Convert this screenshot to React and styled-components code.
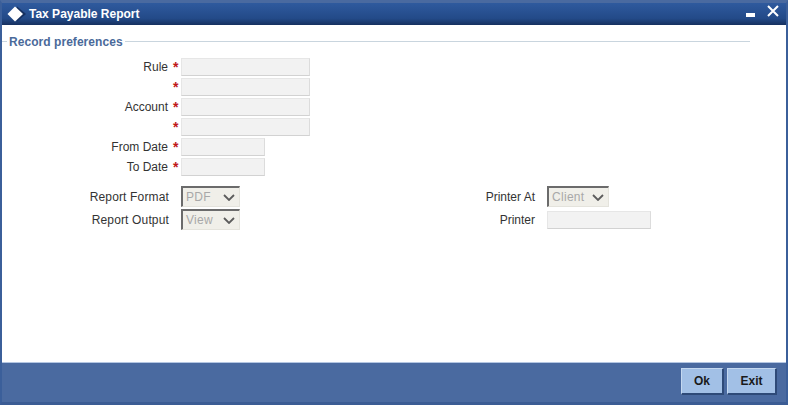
import React from "react";
import styled, { createGlobalStyle } from "styled-components";

const GlobalStyle = createGlobalStyle`
  html, body {
    margin: 0;
    padding: 0;
    background: #fff;
  }
  * {
    box-sizing: border-box;
  }
`;

function Chevron() {
  return (
    <svg width="12" height="7" viewBox="0 0 12 7">
      <path d="M1 1 L6 6 L11 1" fill="none" stroke="#5c5c5c" strokeWidth="1.8" />
    </svg>
  );
}

function Diamond() {
  return (
    <svg width="20" height="16" viewBox="0 0 20 16">
      <path d="M10 0.5 L19 8 L10 15.5 Z" fill="#16305f" />
      <path d="M8 0.5 L16 8 L8 15.5 L0.5 8 Z" fill="#fff" />
    </svg>
  );
}

function Field({ label, width }) {
  return (
    <Row>
      <Label>{label}</Label>
      <Star>*</Star>
      <TextBox $width={width} />
    </Row>
  );
}

function Dropdown({ value, width }) {
  return (
    <SelectBox $width={width}>
      <SelectText>{value}</SelectText>
      <Chevron />
    </SelectBox>
  );
}

export default function App() {
  return (
    <Window>
      <GlobalStyle />
      <TitleBar>
        <TitleLeft>
          <Diamond />
          <Title>Tax Payable Report</Title>
        </TitleLeft>
        <WinButtons>
          <svg width="9" height="4" viewBox="0 0 9 4">
            <rect width="9" height="4" fill="#fff" />
          </svg>
          <svg width="12" height="12" viewBox="0 0 12 12">
            <path d="M1 1 L11 11 M11 1 L1 11" stroke="#fff" strokeWidth="2" />
          </svg>
        </WinButtons>
      </TitleBar>

      <Body>
        <Legend>
          <LegendTick />
          <LegendText>Record preferences</LegendText>
          <LegendLine />
        </Legend>

        <Fields>
          <Field label="Rule" width={129} />
          <Field label="" width={129} />
          <Field label="Account" width={129} />
          <Field label="" width={129} />
          <Field label="From Date" width={84} />
          <Field label="To Date" width={84} />
        </Fields>

        <Selects>
          <SelectColumn>
            <SelectRow>
              <SelectLabel>Report Format</SelectLabel>
              <Dropdown value="PDF" width={59} />
            </SelectRow>
            <SelectRow>
              <SelectLabel>Report Output</SelectLabel>
              <Dropdown value="View" width={59} />
            </SelectRow>
          </SelectColumn>
          <PrinterColumn>
            <SelectRow>
              <PrinterLabel>Printer At</PrinterLabel>
              <Dropdown value="Client" width={62} />
            </SelectRow>
            <SelectRow>
              <PrinterLabel>Printer</PrinterLabel>
              <TextBox $width={104} />
            </SelectRow>
          </PrinterColumn>
        </Selects>
      </Body>

      <Footer>
        <FootButton $width={43}>Ok</FootButton>
        <FootButton $width={50}>Exit</FootButton>
      </Footer>
    </Window>
  );
}

const Window = styled.div`
  width: 788px;
  height: 405px;
  display: flex;
  flex-direction: column;
  background: #4a6aa0;
  border: 2px solid #3b5f9a;
  border-top: 3px solid #4a6aa0;
  border-bottom: 3px solid #3b5c94;
  font-family: "Liberation Sans", Arial, sans-serif;
  overflow: hidden;
`;

const TitleBar = styled.div`
  height: 22px;
  flex: none;
  display: flex;
  align-items: center;
  justify-content: space-between;
  padding: 0 7px 0 5px;
  background: linear-gradient(#2f5a9e, #234a88 70%, #16305f);
`;

const TitleLeft = styled.div`
  display: flex;
  align-items: center;
  gap: 2px;
`;

const Title = styled.span`
  color: #fff;
  font-size: 12px;
  font-weight: bold;
`;

const WinButtons = styled.div`
  display: flex;
  align-items: flex-start;
  gap: 12px;
  height: 100%;
  padding-top: 2px;

  svg:first-child {
    margin-top: 8px;
  }
`;

const Body = styled.div`
  flex: 1;
  background: #fff;
  border-bottom: 1px solid #b4c6e2;
  padding-top: 9px;
`;

const Legend = styled.div`
  display: flex;
  align-items: center;
  height: 15px;
  padding-right: 36px;
`;

const LegendTick = styled.div`
  width: 5px;
  height: 1px;
  background: #c9d5de;
`;

const LegendText = styled.span`
  color: #4a6a9a;
  font-size: 12px;
  font-weight: bold;
  letter-spacing: 0.05px;
  padding: 0 2px;
`;

const LegendLine = styled.div`
  flex: 1;
  height: 1px;
  background: #c9d5de;
`;

const Fields = styled.div`
  display: flex;
  flex-direction: column;
  gap: 2px;
  margin-top: 9px;
`;

const Row = styled.div`
  display: flex;
  align-items: center;
  height: 18px;
`;

const Label = styled.span`
  width: 166px;
  margin-right: 1px;
  text-align: right;
  color: #333;
  font-size: 12px;
`;

const Star = styled.span`
  width: 12px;
  padding-left: 4px;
  color: #c01818;
  font-size: 14px;
  font-weight: bold;
  line-height: 18px;
`;

const TextBox = styled.div`
  width: ${(p) => p.$width}px;
  height: 18px;
  background: #f2f2f2;
  border: 1px solid #e6e6e6;
  border-bottom: 1px solid #d2d2d2;
  border-right: 1px solid #dcdcdc;
`;

const Selects = styled.div`
  display: flex;
  margin-top: 10px;
`;

const SelectColumn = styled.div`
  display: flex;
  flex-direction: column;
  gap: 2px;
  width: 366px;
`;

const PrinterColumn = styled(SelectColumn)`
  width: auto;
`;

const SelectRow = styled.div`
  display: flex;
  align-items: center;
  height: 21px;
`;

const SelectLabel = styled.span`
  width: 167px;
  margin-right: 12px;
  text-align: right;
  color: #333;
  font-size: 12px;
  letter-spacing: 0.15px;
`;

const PrinterLabel = styled(SelectLabel)`
  letter-spacing: 0;
`;

const SelectBox = styled.div`
  width: ${(p) => p.$width}px;
  height: 21px;
  display: flex;
  align-items: center;
  justify-content: space-between;
  padding: 0 4px 0 3px;
  background: #f0efe9;
  border-top: 2px solid #6b6b6b;
  border-left: 2px solid #6b6b6b;
  border-right: 1px solid #e4e3dc;
  border-bottom: 1px solid #e4e3dc;
`;

const SelectText = styled.span`
  color: #a8a8a8;
  font-size: 12px;
  letter-spacing: 0.3px;
`;

const Footer = styled.div`
  height: 39px;
  flex: none;
  display: flex;
  align-items: center;
  justify-content: flex-end;
  gap: 3px;
  padding: 0 9px 3px 0;
  background: #4a6aa0;
`;

const FootButton = styled.div`
  width: ${(p) => p.$width}px;
  height: 27px;
  display: flex;
  align-items: center;
  justify-content: center;
  background: #a2c0e6;
  border-top: 1px solid #c4d8f0;
  border-left: 1px solid #c4d8f0;
  border-right: 2px solid #2e4a78;
  border-bottom: 2px solid #2e4a78;
  color: #1a1a1a;
  font-size: 12px;
  font-weight: bold;
`;
